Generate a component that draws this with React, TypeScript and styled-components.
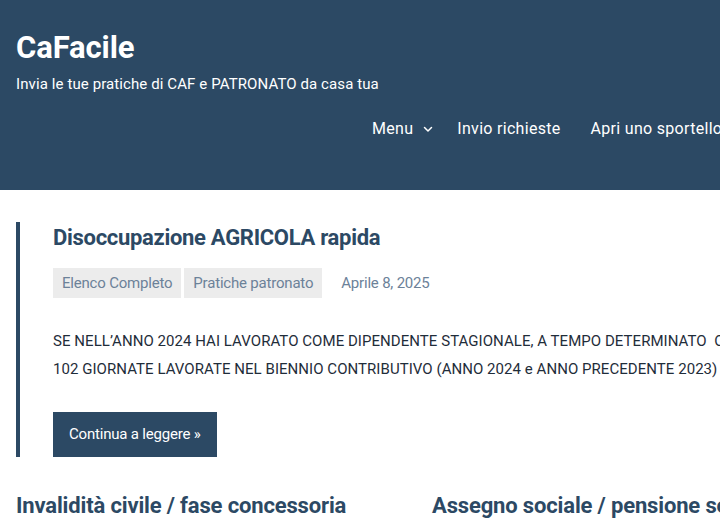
import React from 'react';
import styled, { createGlobalStyle } from 'styled-components';

const GlobalStyle = createGlobalStyle`
  html, body {
    margin: 0;
    padding: 0;
    overflow: hidden;
    background: #ffffff;
  }
  body {
    font-family: Roboto, "Liberation Sans", Arial, sans-serif;
    color: #2c4964;
  }
`;

const Page = styled.div`
  width: 1120px;
`;

const Header = styled.header`
  background: #2c4964;
  height: 190px;
  box-sizing: border-box;
  padding: 30px 16px 0;
  color: #ffffff;
`;

const SiteTitle = styled.h1`
  margin: 0;
  font-size: 31px;
  font-weight: 700;
  line-height: 36px;
  letter-spacing: -0.1px;
`;

const Tagline = styled.p`
  margin: 8px 0 0;
  font-size: 15px;
  line-height: 20px;
  letter-spacing: 0.1px;
`;

const Nav = styled.nav`
  display: flex;
  align-items: center;
  gap: 30px;
  margin-top: 24px;
  padding-left: 356px;
`;

const NavItem = styled.a<{ $dropdown?: boolean }>`
  display: flex;
  align-items: center;
  gap: 9px;
  font-size: 16px;
  line-height: 22px;
  color: #ffffff;
  text-decoration: none;
  letter-spacing: 0.3px;
  margin-right: ${(props) => (props.$dropdown ? '-7px' : '0')};
`;

const Main = styled.main`
  padding: 32px 16px 0;
`;

const Featured = styled.article`
  border-left: 4px solid #2c4964;
  padding-left: 33px;
`;

const PostTitle = styled.h2`
  margin: 0;
  font-size: 22px;
  font-weight: 700;
  line-height: 32px;
  letter-spacing: -0.3px;
  color: #2c4964;
`;

const Meta = styled.div`
  display: flex;
  align-items: center;
  gap: 3px;
  margin-top: 14px;
`;

const Tag = styled.span`
  background: #ececec;
  color: #6c8299;
  font-size: 15px;
  line-height: 30px;
  padding: 0 9px;
  letter-spacing: -0.2px;
`;

const DateText = styled.span`
  color: #6c8299;
  font-size: 15px;
  margin-left: 16px;
  letter-spacing: -0.2px;
`;

const Excerpt = styled.p`
  margin: 29px 0 0;
  width: 1000px;
  font-size: 15px;
  line-height: 28px;
  color: #1f2d3a;
  letter-spacing: 0.05px;
  white-space: nowrap;
`;

const ReadMore = styled.a`
  display: inline-block;
  margin-top: 29px;
  background: #2c4964;
  color: #ffffff;
  font-size: 15px;
  line-height: 45px;
  padding: 0 16px;
  text-decoration: none;
  letter-spacing: -0.2px;
`;

const Grid = styled.div`
  display: grid;
  grid-template-columns: 400px 400px;
  column-gap: 16px;
  margin-top: 34px;
`;

const CardTitle = styled.h3`
  margin: 0;
  font-size: 22px;
  font-weight: 700;
  line-height: 30px;
  letter-spacing: -0.15px;
  color: #2c4964;
  white-space: nowrap;
`;

const Chevron = () => (
  <svg width="12" height="12" viewBox="0 0 24 24" fill="none" stroke="#ffffff" strokeWidth="3" strokeLinecap="round" strokeLinejoin="round">
    <polyline points="5 9 12 16 19 9" />
  </svg>
);

const App: React.FC = () => (
  <Page>
    <GlobalStyle />
    <Header>
      <SiteTitle>CaFacile</SiteTitle>
      <Tagline>Invia le tue pratiche di CAF e PATRONATO da casa tua</Tagline>
      <Nav>
        <NavItem href="#" $dropdown>
          Menu <Chevron />
        </NavItem>
        <NavItem href="#">Invio richieste</NavItem>
        <NavItem href="#">Apri uno sportello</NavItem>
      </Nav>
    </Header>
    <Main>
      <Featured>
        <PostTitle>Disoccupazione AGRICOLA rapida</PostTitle>
        <Meta>
          <Tag>Elenco Completo</Tag>
          <Tag>Pratiche patronato</Tag>
          <DateText>Aprile 8, 2025</DateText>
        </Meta>
        <Excerpt>
          SE NELL’ANNO 2024 HAI LAVORATO COME DIPENDENTE STAGIONALE, A TEMPO DETERMINATO&nbsp; O
          CON ALMENO
          <br />
          102 GIORNATE LAVORATE NEL BIENNIO CONTRIBUTIVO (ANNO 2024 e ANNO PRECEDENTE 2023) PUOI
          RICHIEDERE
        </Excerpt>
        <ReadMore href="#">Continua a leggere »</ReadMore>
      </Featured>
      <Grid>
        <CardTitle>Invalidità civile / fase concessoria</CardTitle>
        <CardTitle>Assegno sociale / pensione sociale</CardTitle>
      </Grid>
    </Main>
  </Page>
);

export default App;
